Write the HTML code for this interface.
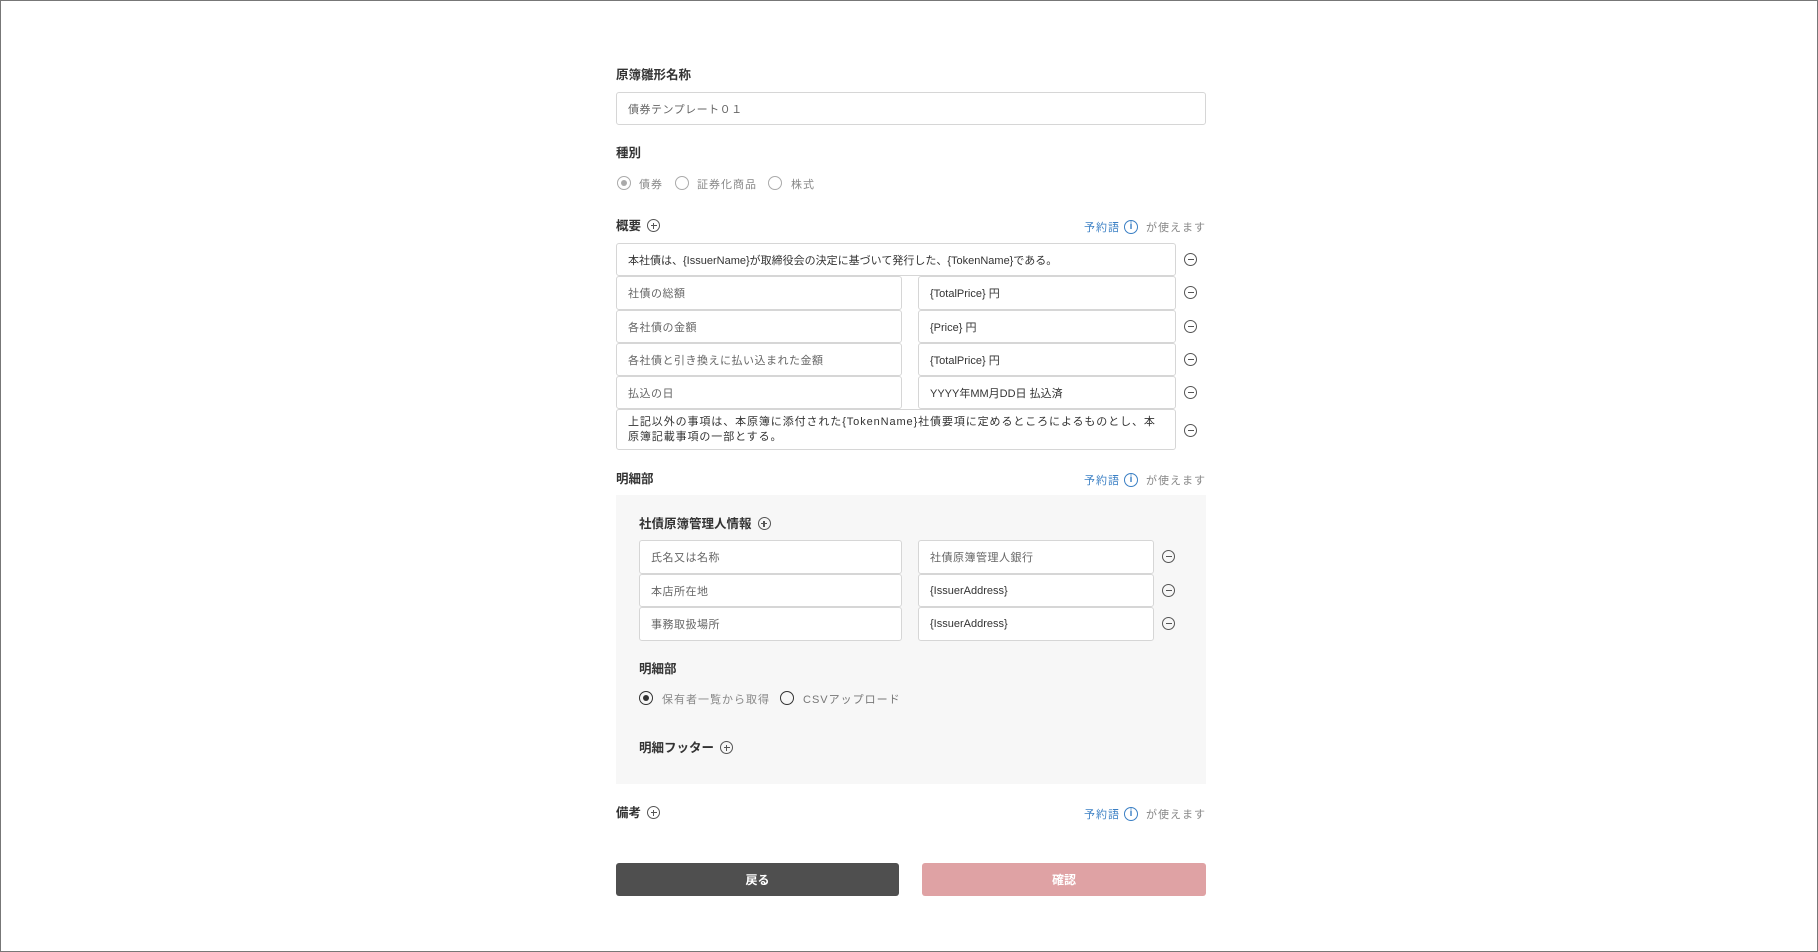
<!DOCTYPE html>
<html><head><meta charset="utf-8"><style>
*{box-sizing:border-box;margin:0;padding:0}
body{width:1818px;height:952px;background:#fff;font-family:"Liberation Sans","Noto Sans CJK JP",sans-serif;position:relative;overflow:hidden;color:#333}
.frame{position:absolute;left:0;top:0;width:1818px;height:952px;border:1px solid #777}
.a{position:absolute}
.lbl{font-size:12.5px;font-weight:bold;color:#333;line-height:16px}
.in{position:absolute;border:1px solid #d6d6d6;border-radius:3px;background:#fff;font-size:11px;color:#666;padding:0 11px;display:flex;align-items:center;letter-spacing:.5px}
.in.v{color:#333;letter-spacing:0}
.minus{position:absolute;width:13px;height:13px;border:1.2px solid #555;border-radius:50%}
.minus:after{content:"";position:absolute;left:2.5px;right:2.5px;top:4.8px;height:1.2px;background:#555}
.plus{display:inline-block;position:relative;width:13px;height:13px;border:1.2px solid #555;border-radius:50%;vertical-align:-2px;margin-left:6px}
.plus:before,.plus:after{content:"";position:absolute;background:#555}
.plus:before{left:2.5px;right:2.5px;top:4.8px;height:1.2px}
.plus:after{top:2.5px;bottom:2.5px;left:4.8px;width:1.2px}
.yk{position:absolute;font-size:11px;color:#888;display:flex;align-items:center;letter-spacing:1px}
.yk b{font-weight:normal;color:#3a7fc4}
.info{display:inline-block;width:14px;height:14px;border:1.5px solid #3a7fc4;border-radius:50%;color:#3a7fc4;font-size:10px;font-weight:bold;text-align:center;line-height:11px;margin:0 8px 0 4px;letter-spacing:0}
.radio{position:absolute;width:14px;height:14px;border:1.3px solid #aaa;border-radius:50%}
.radio.on:after{content:"";position:absolute;left:3px;top:3px;width:6px;height:6px;border-radius:50%;background:#aaa}
.radio.d{border-color:#333;border-width:1.5px}
.radio.d.on:after{background:#333;left:2.5px;top:2.5px}
.rt{position:absolute;font-size:11px;color:#888;letter-spacing:1px}
.btn{position:absolute;height:33px;border-radius:3px;color:#fff;font-size:12px;font-weight:bold;display:flex;align-items:center;justify-content:center}
</style></head><body>
<div class="frame"></div>

<div class="a lbl" style="left:616px;top:67px">原簿雛形名称</div>
<div class="in" style="left:616px;top:92px;width:590px;height:33px">債券テンプレート０１</div>

<div class="a lbl" style="left:616px;top:145px">種別</div>
<div class="radio on" style="left:617px;top:176px"></div><div class="rt" style="left:639px;top:176px">債券</div>
<div class="radio" style="left:675px;top:176px"></div><div class="rt" style="left:697px;top:176px">証券化商品</div>
<div class="radio" style="left:768px;top:176px"></div><div class="rt" style="left:791px;top:176px">株式</div>

<div class="a lbl" style="left:616px;top:218px">概要<span class="plus"></span></div>
<div class="yk" style="right:612px;top:219px"><b>予約語</b><span class="info">i</span>が使えます</div>

<div class="in v" style="left:616px;top:243px;width:560px;height:33px">本社債は、{IssuerName}が取締役会の決定に基づいて発行した、{TokenName}である。</div>
<div class="minus" style="left:1184px;top:253px"></div>

<div class="in" style="left:616px;top:276px;width:286px;height:34px">社債の総額</div>
<div class="in v" style="left:918px;top:276px;width:258px;height:34px">{TotalPrice} 円</div>
<div class="minus" style="left:1184px;top:286px"></div>

<div class="in" style="left:616px;top:310px;width:286px;height:33px">各社債の金額</div>
<div class="in v" style="left:918px;top:310px;width:258px;height:33px">{Price} 円</div>
<div class="minus" style="left:1184px;top:320px"></div>

<div class="in" style="left:616px;top:343px;width:286px;height:33px">各社債と引き換えに払い込まれた金額</div>
<div class="in v" style="left:918px;top:343px;width:258px;height:33px">{TotalPrice} 円</div>
<div class="minus" style="left:1184px;top:353px"></div>

<div class="in" style="left:616px;top:376px;width:286px;height:33px">払込の日</div>
<div class="in v" style="left:918px;top:376px;width:258px;height:33px">YYYY年MM月DD日 払込済</div>
<div class="minus" style="left:1184px;top:386px"></div>

<div class="in v" style="left:616px;top:409px;width:560px;height:41px;line-height:15px;align-items:center;letter-spacing:0.9px">上記以外の事項は、本原簿に添付された{TokenName}社債要項に定めるところによるものとし、本原簿記載事項の一部とする。</div>
<div class="minus" style="left:1184px;top:424px"></div>

<div class="a lbl" style="left:616px;top:471px">明細部</div>
<div class="yk" style="right:612px;top:472px"><b>予約語</b><span class="info">i</span>が使えます</div>

<div class="a" style="left:616px;top:495px;width:590px;height:289px;background:#f7f7f7"></div>
<div class="a lbl" style="left:639px;top:516px">社債原簿管理人情報<span class="plus"></span></div>

<div class="in" style="left:639px;top:540px;width:263px;height:34px">氏名又は名称</div>
<div class="in" style="left:918px;top:540px;width:236px;height:34px">社債原簿管理人銀行</div>
<div class="minus" style="left:1162px;top:550px"></div>
<div class="in" style="left:639px;top:574px;width:263px;height:33px">本店所在地</div>
<div class="in v" style="left:918px;top:574px;width:236px;height:33px">{IssuerAddress}</div>
<div class="minus" style="left:1162px;top:584px"></div>
<div class="in" style="left:639px;top:607px;width:263px;height:34px">事務取扱場所</div>
<div class="in v" style="left:918px;top:607px;width:236px;height:34px">{IssuerAddress}</div>
<div class="minus" style="left:1162px;top:617px"></div>

<div class="a lbl" style="left:639px;top:661px">明細部</div>
<div class="radio d on" style="left:639px;top:691px"></div><div class="rt" style="left:662px;top:691px">保有者一覧から取得</div>
<div class="radio d" style="left:780px;top:691px"></div><div class="rt" style="left:803px;top:691px;color:#777">CSVアップロード</div>

<div class="a lbl" style="left:639px;top:740px">明細フッター<span class="plus"></span></div>

<div class="a lbl" style="left:616px;top:805px">備考<span class="plus"></span></div>
<div class="yk" style="right:612px;top:806px"><b>予約語</b><span class="info">i</span>が使えます</div>

<div class="btn" style="left:616px;top:863px;width:283px;background:#4f4f4f">戻る</div>
<div class="btn" style="left:922px;top:863px;width:284px;background:#dfa2a4">確認</div>
</body></html>
